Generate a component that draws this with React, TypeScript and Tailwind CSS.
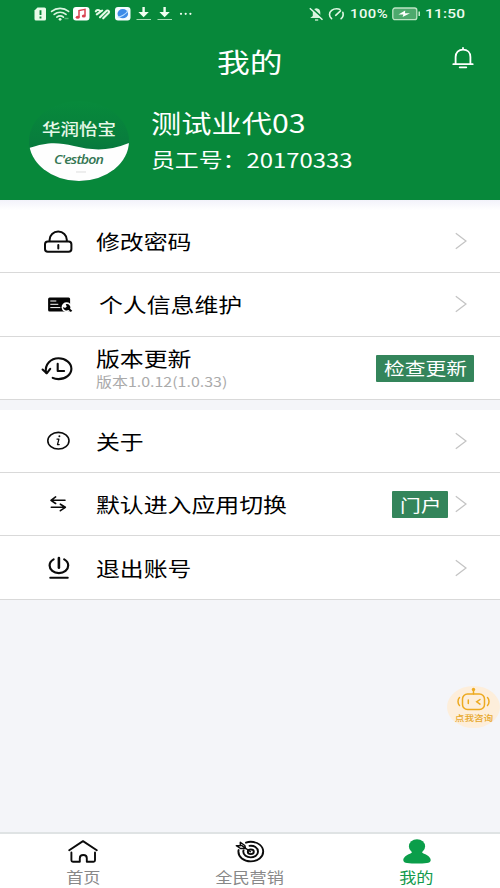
import React from "react";
import clsx from "clsx";

// wide lettering used across the whole app
function Wide({ children, scale = "scale-x-120", center }: { children: React.ReactNode; scale?: string; center?: boolean }) {
  return (
    <span className={clsx("inline-block whitespace-nowrap", scale, center ? "origin-center" : "origin-left")}>
      {children}
    </span>
  );
}

function Chevron() {
  return (
    <svg className="h-[18px] w-3" viewBox="0 0 12 18" fill="none" stroke="#c4c4c4" strokeWidth="1.3">
      <path d="M0.8 1.2 11 9 0.8 16.8" />
    </svg>
  );
}

const line = { fill: "none", stroke: "#0b0b0b", strokeLinecap: "round", strokeLinejoin: "round" } as const;

// row icons share a 36x32 box
const LockIcon = () => (
  <svg className="h-8 w-9" viewBox="0 0 36 32" {...line} strokeWidth="2">
    <path d="M9.6 16v-1.2c0-4.800 3.800-8.200 8.600-8.200s8.600 3.400 8.600 8.200v1.200" />
    <rect x="5" y="16.400" width="26.400" height="10.400" rx="2.800" />
    <path d="M18.300 20v3.600" />
  </svg>
);

const CardIcon = () => (
  <svg className="h-8 w-9" viewBox="0 0 36 32">
    <rect x="8.100" y="9.600" width="22" height="14" rx="1.500" fill="#050505" />
    <path d="M10.300 13h6M10.300 16.300h8M10.300 19.600h10" stroke="#fff" strokeWidth="1" />
    <circle cx="26.600" cy="19.200" r="5" fill="#fff" />
    <path d="m25.700 16.200 1.100 2.300-1.700 1.400-2-1a3.600 3.300 0 0 0 5.400 3.100l2.300 2 1.500-1.300-2.200-2a3.600 3.300 0 0 0-4.400-4.500z" fill="#050505" />
  </svg>
);

const HistoryIcon = () => (
  <svg className="h-8 w-9" viewBox="0 0 36 32" {...line} strokeWidth="2.100">
    <path d="M6 20.500c-1.400-8.500 5-14.200 12.500-14.200 7 0 12.900 4.600 12.900 10.400s-5.900 10.400-12.900 10.400c-2 0-4.200-.4-5.800-1.300" />
    <path d="m2.600 17.500 4.100 3.800 3.500-4.500" />
    <path d="M17.700 11.800v7.200h6.400" />
  </svg>
);

const InfoIcon = () => (
  <svg className="h-8 w-9" viewBox="0 0 36 32" {...line} strokeWidth="1.600">
    <ellipse cx="18.400" cy="15.700" rx="10.600" ry="8.300" />
    <path d="M17 14.100h1.900l-1.400 5.500h1.700" strokeWidth="1.300" />
    <circle cx="19.400" cy="11.200" r="1" fill="#111" stroke="none" />
  </svg>
);

const SwapIcon = () => (
  <svg className="h-8 w-9" viewBox="0 0 36 32" {...line} strokeWidth="1.600">
    <path d="M25 12.300H11.300M15.600 8.900l-4.600 3.400 4.600 3.200M11.300 19.300H25M20.400 16.200l4.900 3.100-4.900 3.400" />
  </svg>
);

const PowerIcon = () => (
  <svg className="h-8 w-9" viewBox="0 0 36 32" {...line} strokeWidth="2.200">
    <path d="M13.600 7.400c-2.500 1.400-4 3.300-4 6.100 0 4.300 4.100 7.700 9.300 7.700s9.300-3.400 9.300-7.700c0-2.800-1.500-4.700-4-6.100" />
    <path d="M18.900 6v9.800" strokeWidth="2.600" />
    <path d="M10.200 25.700H27.800" strokeWidth="1.900" />
  </svg>
);

function StatusBar() {
  return (
    <div className="flex h-[27px] items-center pl-[34px] text-[#edfbef]">
      <svg className="h-4 w-[160px]" viewBox="0 0 160 16">
        <path d="M3.500 1.500h7a1.500 1.500 0 0 1 1.500 1.500v10a1.500 1.500 0 0 1-1.500 1.500H2A1.500 1.500 0 0 1 .5 13V4.500z" fill="#e9fbe9" />
        <path d="M6.500 4.200v4.700M6.500 10.600v2" stroke="#07883a" strokeWidth="1.900" />
        <g fill="none" stroke="#d9f5df" strokeWidth="1.700" strokeLinecap="round">
          <path d="M17.600 5.400c5-4 12-4 17 0M20.200 8.400c3.500-2.700 8.300-2.700 11.800 0M22.800 11.100c2-1.500 4.700-1.500 6.600 0" />
        </g>
        <circle cx="26.100" cy="13.300" r="1.400" fill="#d9f5df" />
        <path d="M30.500 12.500h4" stroke="#56b577" strokeWidth="1.500" />
        <rect x="39" y="1" width="16.500" height="13.500" rx="3" fill="#fff" />
        <path d="M45 11V4.500l6-1.200v6.400" fill="none" stroke="#d9424f" strokeWidth="1.500" />
        <ellipse cx="43.700" cy="11.200" rx="2" ry="1.500" fill="#d9424f" />
        <ellipse cx="49.800" cy="10" rx="2" ry="1.500" fill="#d9424f" />
        <g fill="none" stroke="#e4fae7" strokeWidth="2.100" strokeLinecap="round" strokeLinejoin="round">
          <path d="M61.800 5.400c.8-2 3.400-1.600 4.600.2M62.800 8.400l5.400-3.900M66 11.200l6.600-6.500c1.800-.8 3 .6 2.200 2l-5.600 5.600" />
        </g>
        <rect x="81" y="1" width="15.500" height="13.500" rx="3" fill="#f4fbff" />
        <ellipse cx="88.800" cy="7.700" rx="5.300" ry="4.600" fill="#3b8be8" />
        <path d="M83.500 11c2.500.5 9-3 10.600-6.500" fill="none" stroke="#b5dcff" strokeWidth="1.100" />
        <g fill="#f1fff2">
          <path d="M108.400 1h2.400v5h4l-5.200 5.200L104.400 6h4zM129.400 1h2.400v5h4l-5.200 5.200-5.200-5.200h4z" />
          <circle cx="147" cy="7.800" r="1.100" />
          <circle cx="151.700" cy="7.800" r="1.100" />
          <circle cx="156.400" cy="7.800" r="1.100" />
        </g>
        <path d="M102.500 13.500h14.500M123.500 13.500H138" stroke="#a5ddb4" strokeWidth="1.100" />
      </svg>
      <svg className="ml-[114px] h-4 w-[40px]" viewBox="0 0 40 16">
        <path d="M2.200 12h11.800l-1.700-2V6.500c0-2.200-1.300-4-3.800-4.200-2.500.2-3.700 2-3.700 4.200V10z" fill="#d8f3dc" />
        <path d="m3 1.500 12.500 11.500" stroke="#07883a" strokeWidth="1.800" />
        <path d="m1.800 2.200 12.700 11.500" stroke="#e5f8e8" strokeWidth="1.500" />
        <path d="M7 14h3.200" stroke="#d8f3dc" strokeWidth="1.300" />
        <g fill="none" stroke="#e0f7e3" strokeWidth="1.600" strokeLinecap="round">
          <path d="M23.600 12.700c-1.500-1.300-2.100-2.700-2.100-4.300 0-3.200 3.300-5.700 7.200-5.700 1.200 0 2.300.2 3.200.7M34.800 6.200c.8 2.300.3 4.700-1.700 6.500M27.700 9.300l4.800-4.500" />
        </g>
      </svg>
      <span className="ml-[2px] w-[42px] font-['Roboto',sans-serif] text-[13px] font-medium tracking-[0.4px]">
        <Wide scale="scale-x-[1.140]">100%</Wide>
      </span>
      <svg className="h-4 w-[28px]" viewBox="0 0 28 16">
        <rect x=".8" y="2" width="24" height="11.600" rx="2.200" fill="#4da96d" stroke="#bce4c4" strokeWidth="1.300" />
        <path d="m13.200 4.600-6.800 4h5l-.8 2.500 7.400-3.800h-5z" fill="#fff" />
        <path d="M27.200 5.500v4.500" stroke="#d8f3dc" strokeWidth="1.400" />
      </svg>
      <span className="ml-[5px] font-['Roboto',sans-serif] text-[13.200px] font-medium tracking-[0.200px]">
        <Wide scale="scale-x-[1.170]">11:50</Wide>
      </span>
    </div>
  );
}

function Avatar() {
  return (
    <div className="relative h-20 w-[100px] shrink-0 overflow-hidden rounded-[50%] bg-linear-to-b from-[#078a3b] via-[#087d3d] to-[#04663d]">
      <svg className="absolute inset-0 h-20 w-[100px]" viewBox="0 0 100 80">
        <path d="M0 47C18 41 28 41 45 45S78 51 100 42V80H0z" fill="#fefefe" />
        <path d="M47 71h10" stroke="#ddd" strokeWidth="1" />
      </svg>
      <div className="absolute top-[17px] left-[13px] text-[15.400px] leading-5 font-medium text-[#e6f8e8]">
        <Wide>华润怡宝</Wide>
      </div>
      <div className="absolute top-[51px] left-[25px] font-['Open_Sans',sans-serif] text-[12px] leading-4 font-semibold tracking-[-0.700px] text-[#347653] italic">
        <Wide scale="scale-x-[1.180]">C'estbon</Wide>
      </div>
    </div>
  );
}

function Header() {
  return (
    <header className="h-[200px] bg-[#07883a] text-white">
      <StatusBar />
      <div className="flex h-[68px] items-center pl-[217px]">
        <h1 className="w-[235px] text-[27.300px] leading-8">
          <Wide>我的</Wide>
        </h1>
        <svg className="mb-[7px] h-6 w-[22px]" viewBox="0 0 22 24" fill="none" stroke="#fff" strokeWidth="1.800" strokeLinecap="round">
          <path d="M3.600 18.200V11c0-4.400 3-7.300 7.400-7.300s7.400 2.900 7.400 7.300v7.200M1.300 18.200h19.400M11 3.500V2M7.700 21.300h6.600" />
        </svg>
      </div>
      <div className="flex items-start pl-[29px] pt-[6px]">
        <Avatar />
        <div className="ml-[21.500px] pt-[3px]">
          <div className="text-[25.200px] leading-9">
            <Wide>测试业代03</Wide>
          </div>
          <div className="pt-[2px] text-[19.900px] leading-9">
            <Wide>员工号：20170333</Wide>
          </div>
        </div>
      </div>
    </header>
  );
}

type RowProps = {
  icon: React.ReactNode;
  label: string;
  sub?: string;
  indent?: boolean;
  children: React.ReactNode;
};

function Row({ icon, label, sub, indent, children }: RowProps) {
  return (
    <div className="flex h-[63.300px] items-center border-b-[1.500px] border-[#d9d9d9] bg-white pr-[33px] pl-10">
      {icon}
      <div className={clsx("flex-1 pt-[2px]", indent ? "ml-[23px]" : "ml-5")}>
        <div className={clsx("text-[19.900px] text-black", sub ? "leading-[26px]" : "leading-7")}>
          <Wide>{label}</Wide>
        </div>
        {sub && (
          <div className="text-[13.300px] leading-[19px] text-[#aaa]">
            <Wide>{sub}</Wide>
          </div>
        )}
      </div>
      {children}
    </div>
  );
}

function Tag({ children, className }: { children: string; className: string }) {
  return (
    <div className={clsx("mt-px flex h-[27px] items-center rounded-[1px] bg-[#34855b] pl-2 text-[17.300px] text-white", className)}>
      <Wide>{children}</Wide>
    </div>
  );
}

function Assistant() {
  return (
    <div className="absolute top-[686px] left-[447px] flex h-[42px] w-[53px] flex-col items-center overflow-hidden rounded-[50%] bg-[#fdeedb]">
      <svg className="h-[26px] w-9 shrink-0" viewBox="0 0 36 26" fill="none" stroke="#edaa20" strokeWidth="1.500" strokeLinecap="round">
        <rect x="6.500" y="8" width="22" height="15.500" rx="5" />
        <path d="M17.500 8V4M3.500 11.500c-2 2-2 6 0 8M31.500 11.500c2 2 2 6 0 8M12.300 14v3.500M24 13.500l-3.300 2.300 3.300 2.300" />
        <circle cx="17.500" cy="3.500" r="1.700" fill="#edaa20" stroke="none" />
      </svg>
      <div className="text-[8px] leading-3 font-medium text-[#e7a82c]">
        <Wide center>点我咨询</Wide>
      </div>
    </div>
  );
}

const HomeIcon = () => (
  <svg className="h-7 w-8" viewBox="0 0 32 28" {...line} strokeWidth="1.900">
    <path d="M2.200 13.300 16 4.100l13.800 9.200" />
    <path d="M4.400 15.500v7.700c0 1 .5 1.500 1.500 1.500h6.900v-3.500c0-4.200 7-4.200 7 0v3.500h6.700c1 0 1.500-.5 1.500-1.500v-7.700" />
  </svg>
);

const TargetIcon = () => (
  <svg className="h-7 w-8" viewBox="0 0 32 28" {...line} strokeWidth="1.900">
    <path d="M12 5.700c1.500-.6 3-.9 4.700-.9 7.200 0 12.500 4.300 12.500 9.700s-5.300 9.900-12.500 9.900-12.300-4.400-12.300-9.800c0-.5 0-1 .2-1.500" />
    <path d="M15.500 8.900c4.500-.6 8.500 1.800 8.500 5.800 0 3.300-3.300 5.700-7.300 5.700s-7.400-2.300-7.400-5.700c0-.5.1-.9.2-1.300" />
    <ellipse cx="16.800" cy="14.800" rx="3" ry="2.300" />
    <path d="m16.500 14.700-9-6.300M2.300 8.600l4 .2V5.200l4.500 3.300.7 2.700-5 .3z" strokeWidth="1.400" />
  </svg>
);

const UserIcon = () => (
  <svg className="h-7 w-8" viewBox="0 0 32 28" fill="#0b9e4a">
    <ellipse cx="16" cy="9.400" rx="8.100" ry="7.200" />
    <path d="M11 14.500c0 1-.5 1.600-2 2.200C5 18.200 2.300 20.500 2.300 23.300c0 1.700 1.700 2.400 3.700 2.700 6 .8 14 .8 20 0 2-.3 3.700-1 3.700-2.700 0-2.800-2.700-5.100-6.700-6.600-1.500-.6-2-1.200-2-2.200z" />
  </svg>
);

const tabs = [
  { label: "首页", icon: <HomeIcon /> },
  { label: "全民营销", icon: <TargetIcon /> },
  { label: "我的", icon: <UserIcon />, active: true },
];

export default function App() {
  return (
    <div className="relative flex h-[888px] w-[500px] flex-col overflow-hidden bg-[#f4f5f9] font-['Noto_Sans_CJK_SC',sans-serif]">
      <Header />
      <main className="flex-1">
        <div className="h-[10px] bg-linear-to-b from-[#f2f2fa] to-white" />
        <Row icon={<LockIcon />} label="修改密码">
          <Chevron />
        </Row>
        <Row icon={<CardIcon />} label="个人信息维护" indent>
          <Chevron />
        </Row>
        <Row icon={<HistoryIcon />} label="版本更新" sub="版本1.0.12(1.0.33)">
          <Tag className="-mr-[7px] w-[98px]">检查更新</Tag>
        </Row>
        <div className="h-[10px]" />
        <Row icon={<InfoIcon />} label="关于">
          <Chevron />
        </Row>
        <Row icon={<SwapIcon />} label="默认进入应用切换">
          <Tag className="mr-[7px] w-14">门户</Tag>
          <Chevron />
        </Row>
        <Row icon={<PowerIcon />} label="退出账号">
          <Chevron />
        </Row>
      </main>
      <nav className="grid h-14 grid-cols-3 border-t-2 border-[#dfe3e4] bg-white">
        {tabs.map((t) => (
          <div key={t.label} className="flex flex-col items-center pt-[3px]">
            {t.icon}
            <span className={clsx("text-[14.300px] leading-6", t.active ? "text-[#149a4c]" : "text-[#888]")}>
              <Wide center>{t.label}</Wide>
            </span>
          </div>
        ))}
      </nav>
      <Assistant />
    </div>
  );
}
